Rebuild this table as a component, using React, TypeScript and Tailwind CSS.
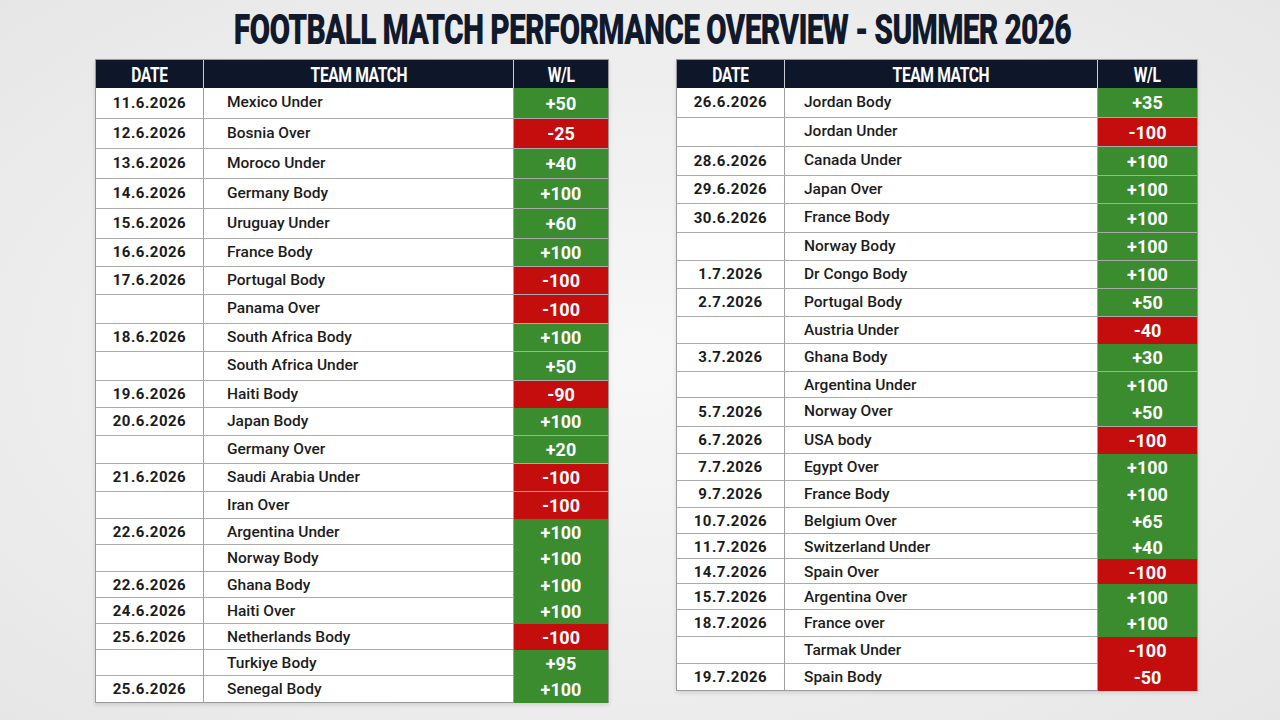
import React from 'react';

type Row = { date: string; team: string; wl: string; h: number };

const H: Record<number, string> = {
  25: 'h-[25px]',
  26: 'h-[26px]',
  27: 'h-[27px]',
  28: 'h-[28px]',
  29: 'h-[29px]',
  30: 'h-[30px]',
};

const left: Row[] = [
  { date: '11.6.2026', team: 'Mexico Under', wl: '+50', h: 30 },
  { date: '12.6.2026', team: 'Bosnia Over', wl: '-25', h: 30 },
  { date: '13.6.2026', team: 'Moroco Under', wl: '+40', h: 30 },
  { date: '14.6.2026', team: 'Germany Body', wl: '+100', h: 30 },
  { date: '15.6.2026', team: 'Uruguay Under', wl: '+60', h: 30 },
  { date: '16.6.2026', team: 'France Body', wl: '+100', h: 28 },
  { date: '17.6.2026', team: 'Portugal Body', wl: '-100', h: 28 },
  { date: '', team: 'Panama Over', wl: '-100', h: 29 },
  { date: '18.6.2026', team: 'South Africa Body', wl: '+100', h: 28 },
  { date: '', team: 'South Africa Under', wl: '+50', h: 29 },
  { date: '19.6.2026', team: 'Haiti Body', wl: '-90', h: 27 },
  { date: '20.6.2026', team: 'Japan Body', wl: '+100', h: 28 },
  { date: '', team: 'Germany Over', wl: '+20', h: 28 },
  { date: '21.6.2026', team: 'Saudi Arabia Under', wl: '-100', h: 28 },
  { date: '', team: 'Iran Over', wl: '-100', h: 27 },
  { date: '22.6.2026', team: 'Argentina Under', wl: '+100', h: 26 },
  { date: '', team: 'Norway Body', wl: '+100', h: 27 },
  { date: '22.6.2026', team: 'Ghana Body', wl: '+100', h: 26 },
  { date: '24.6.2026', team: 'Haiti Over', wl: '+100', h: 26 },
  { date: '25.6.2026', team: 'Netherlands Body', wl: '-100', h: 26 },
  { date: '', team: 'Turkiye Body', wl: '+95', h: 26 },
  { date: '25.6.2026', team: 'Senegal Body', wl: '+100', h: 27 },
];

const right: Row[] = [
  { date: '26.6.2026', team: 'Jordan Body', wl: '+35', h: 29 },
  { date: '', team: 'Jordan Under', wl: '-100', h: 29 },
  { date: '28.6.2026', team: 'Canada Under', wl: '+100', h: 29 },
  { date: '29.6.2026', team: 'Japan Over', wl: '+100', h: 28 },
  { date: '30.6.2026', team: 'France Body', wl: '+100', h: 29 },
  { date: '', team: 'Norway Body', wl: '+100', h: 28 },
  { date: '1.7.2026', team: 'Dr Congo Body', wl: '+100', h: 28 },
  { date: '2.7.2026', team: 'Portugal Body', wl: '+50', h: 28 },
  { date: '', team: 'Austria Under', wl: '-40', h: 27 },
  { date: '3.7.2026', team: 'Ghana Body', wl: '+30', h: 28 },
  { date: '', team: 'Argentina Under', wl: '+100', h: 26 },
  { date: '5.7.2026', team: 'Norway Over', wl: '+50', h: 29 },
  { date: '6.7.2026', team: 'USA body', wl: '-100', h: 27 },
  { date: '7.7.2026', team: 'Egypt Over', wl: '+100', h: 27 },
  { date: '9.7.2026', team: 'France Body', wl: '+100', h: 27 },
  { date: '10.7.2026', team: 'Belgium Over', wl: '+65', h: 26 },
  { date: '11.7.2026', team: 'Switzerland Under', wl: '+40', h: 25 },
  { date: '14.7.2026', team: 'Spain Over', wl: '-100', h: 25 },
  { date: '15.7.2026', team: 'Argentina Over', wl: '+100', h: 26 },
  { date: '18.7.2026', team: 'France over', wl: '+100', h: 27 },
  { date: '', team: 'Tarmak Under', wl: '-100', h: 27 },
  { date: '19.7.2026', team: 'Spain Body', wl: '-50', h: 27 },
];

function HeadCell({ label, className }: { label: string; className: string }) {
  return (
    <div className={`flex items-center justify-center ${className}`}>
      <span className="inline-block scale-x-[0.78] text-[20px] font-bold tracking-tight text-white">{label}</span>
    </div>
  );
}

function MatchTable({ rows, cols, teamPad }: { rows: Row[]; cols: string; teamPad: string }) {
  return (
    <div className="border border-[#9a9a9a] bg-white shadow-[0_2px_4px_rgba(0,0,0,0.12)]">
      <div className={`grid h-[28px] bg-[#0e1729] ${cols}`}>
        <HeadCell label="DATE" className="border-r border-[#c9ccd2]" />
        <HeadCell label="TEAM MATCH" className="border-r border-[#c9ccd2]" />
        <HeadCell label="W/L" className="" />
      </div>
      {rows.map((r, i) => {
        const win = r.wl.startsWith('+');
        return (
          <div key={i} className={`grid ${cols} ${H[r.h]} ${i > 0 ? 'border-t border-[#ababab]' : ''}`}>
            <div className="flex items-center justify-center border-r border-[#9f9f9f] text-[15px] font-bold tracking-[0.5px] text-[#1b1b1b]">
              {r.date}
            </div>
            <div className={`flex items-center border-r border-[#9f9f9f] text-[15.5px] font-medium text-[#1c1c1c] ${teamPad}`}>
              {r.team}
            </div>
            <div
              className={`flex items-center justify-center text-[18px] font-bold text-white ${
                win ? 'bg-[#3b8b2f]' : 'bg-[#c40e0e]'
              }`}
            >
              {r.wl}
            </div>
          </div>
        );
      })}
    </div>
  );
}

export default function App() {
  return (
    <div className="h-[720px] w-[1280px] overflow-hidden bg-[radial-gradient(ellipse_at_center,#f7f7f7_0%,#ececec_70%,#e6e6e6_100%)] font-['Roboto',sans-serif]">
      <div className="flex h-[59px] items-center justify-center pl-[24px]">
        <h1 className="inline-block scale-x-[0.715] whitespace-nowrap text-[42px] font-black tracking-tight text-[#111a2c]">
          FOOTBALL MATCH PERFORMANCE OVERVIEW - SUMMER 2026
        </h1>
      </div>
      <div className="flex items-start gap-[67px] pl-[95px]">
        <div className="w-[514px]">
          <MatchTable rows={left} cols="grid-cols-[108px_310px_94px]" teamPad="pl-[23px]" />
        </div>
        <div className="w-[522px]">
          <MatchTable rows={right} cols="grid-cols-[108px_313px_99px]" teamPad="pl-[19px]" />
        </div>
      </div>
    </div>
  );
}
